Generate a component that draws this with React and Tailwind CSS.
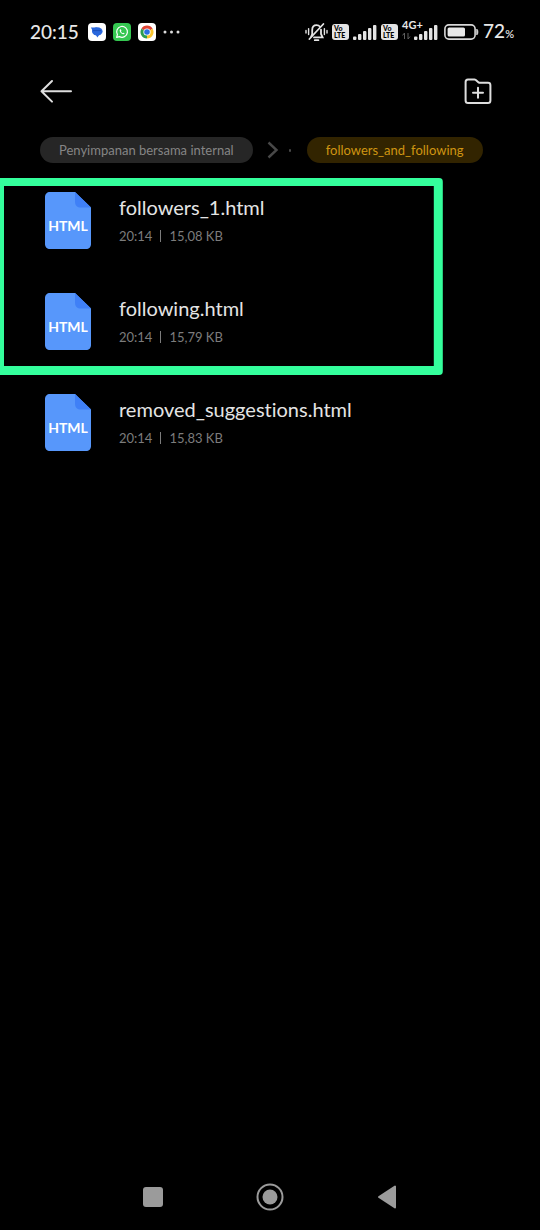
import React from "react";

const files = [
  { name: "followers_1.html", time: "20:14", size: "15,08 KB" },
  { name: "following.html", time: "20:14", size: "15,79 KB" },
  { name: "removed_suggestions.html", time: "20:14", size: "15,83 KB" },
];

function MessagesIcon() {
  return (
    <svg width="18" height="18" viewBox="0 0 18 18" aria-hidden="true">
      <rect width="18" height="18" rx="4" fill="#fff" />
      <ellipse cx="9.3" cy="8.4" rx="5.3" ry="4.2" fill="#2a67dc" />
      <path d="M2.8 4.4H9V8.4H4.2C4.2 6.8 3.8 5.6 2.8 4.4ZM7.6 11.6H11.4L9.4 14.4Z" fill="#2a67dc" />
      <path d="M5.4 7.6H12.6" stroke="#1a4fb8" strokeWidth="1" strokeLinecap="round" />
    </svg>
  );
}

function WhatsAppIcon() {
  return (
    <svg width="18" height="18" viewBox="0 0 18 18" aria-hidden="true">
      <rect width="18" height="18" rx="4" fill="#35c751" />
      <path d="M3.6 14.4L4.4 11.6A5.4 5.4 0 1 1 6.5 13.6Z" fill="none" stroke="#fff" strokeWidth="1.2" strokeLinejoin="round" />
      <path d="M7.3 6.2C6.2 6.8 6.6 8.6 7.9 10C9.3 11.4 11.1 11.8 11.7 10.6L10.4 9.7L9.6 10.2C8.9 9.9 8.3 9.2 8 8.6L8.4 7.8L7.9 6.3Z" fill="#fff" />
    </svg>
  );
}

function ChromeIcon() {
  return (
    <svg width="18" height="18" viewBox="0 0 18 18" aria-hidden="true">
      <rect width="18" height="18" rx="4" fill="#fff" />
      <path d="M9 9L3.37 5.75A6.5 6.5 0 0 1 14.63 5.75Z" fill="#df4334" />
      <path d="M9 9L14.63 5.75A6.5 6.5 0 0 1 9 15.5Z" fill="#f8c42c" />
      <path d="M9 9L9 15.5A6.5 6.5 0 0 1 3.37 5.75Z" fill="#2c9b4e" />
      <circle cx="9" cy="9" r="3.6" fill="#fff" />
      <circle cx="9" cy="9" r="2.8" fill="#2b6fe0" />
    </svg>
  );
}

function MutedBellIcon() {
  return (
    <svg width="23" height="20" viewBox="0 0 23 20" fill="none" stroke="#e4e4e4" strokeWidth="1.8" strokeLinecap="round" aria-hidden="true">
      <path d="M6.2 14.6L7.2 12V8.2C7.2 5.2 9 3.2 11.6 3.2C13 3.2 14.2 3.8 15 4.8M16 7.6V12L17.6 15.4H9M9.8 18.2H13.4" />
      <path d="M4.4 17L18.4 2" />
      <path d="M3.6 6.6V12.6M1 8.4V11M19.4 6.6V12.6M22 8.4V11" strokeWidth="1.4" />
    </svg>
  );
}

function VolteBadge() {
  return (
    <span className="flex h-4 w-[17px] flex-col justify-center rounded-[3px] bg-[#e4e4e4] pl-[2px] text-[7px] leading-[7px] font-black text-black">
      <span>Vo</span>
      <span>LTE</span>
    </span>
  );
}

function SignalIcon() {
  return (
    <svg width="24" height="16" viewBox="0 0 24 16" fill="#e4e4e4" aria-hidden="true">
      <rect x="0" y="12.6" width="3.4" height="3.4" rx="1" />
      <rect x="5" y="10" width="3.4" height="6" rx="1" />
      <rect x="10" y="7" width="3.4" height="9" rx="1" />
      <rect x="15" y="4" width="3.4" height="12" rx="1" />
      <rect x="20" y="1" width="3.4" height="15" rx="1" />
    </svg>
  );
}

function BatteryIcon() {
  return (
    <svg width="35" height="16" viewBox="0 0 35 16" aria-hidden="true">
      <rect x="0.9" y="0.9" width="30.2" height="14.2" rx="4" fill="none" stroke="#d8d8d8" strokeWidth="1.6" />
      <rect x="3.6" y="3.4" width="17.4" height="9.2" rx="1.6" fill="#e8e8e8" />
      <path d="M32.8 5.2C34.2 5.8 34.2 10.2 32.8 10.8Z" fill="#d8d8d8" stroke="#d8d8d8" />
    </svg>
  );
}

function StatusBar() {
  return (
    <div className="flex h-16 items-center justify-between pr-[26px] pl-[30px] text-[#e8e8e8]">
      <div className="flex items-center gap-[7px]">
        <span className="mr-[2px] text-[19px] leading-6 font-medium">20:15</span>
        <MessagesIcon />
        <WhatsAppIcon />
        <ChromeIcon />
        <svg width="17" height="4" viewBox="0 0 17 4" fill="#dcdcdc" aria-hidden="true">
          <circle cx="2" cy="2" r="1.5" />
          <circle cx="8.5" cy="2" r="1.5" />
          <circle cx="15" cy="2" r="1.5" />
        </svg>
      </div>
      <div className="flex items-center gap-1">
        <MutedBellIcon />
        <VolteBadge />
        <SignalIcon />
        <VolteBadge />
        <div className="relative mr-[2px] flex w-[36px] justify-end">
          <SignalIcon />
          <span className="absolute -top-[5px] left-0 text-[11px] leading-[11px] font-bold">4G+</span>
          <svg className="absolute top-[8px] left-0" width="9" height="8" viewBox="0 0 9 8" fill="none" stroke="#606060" aria-hidden="true">
            <path d="M2.5 7V1L0.5 3.4M6 1V7L8 4.6" />
          </svg>
        </div>
        <BatteryIcon />
        <span className="text-[19px] leading-6 font-medium">
          72<span className="text-[11px]">%</span>
        </span>
      </div>
    </div>
  );
}

function Toolbar() {
  return (
    <header className="flex h-[54px] items-center justify-between pr-[47px] pl-[38px]">
      <button type="button" aria-label="Kembali" className="flex">
        <svg width="36" height="26" viewBox="0 0 36 26" fill="none" stroke="#dedede" strokeWidth="2" strokeLinecap="round" strokeLinejoin="round">
          <path d="M14 3L3.5 13.3L14 23.6M3.5 13.3H33" />
        </svg>
      </button>
      <button type="button" aria-label="Folder baru" className="flex">
        <svg width="30" height="28" viewBox="0 0 30 28" fill="none" stroke="#dedede" strokeWidth="2" strokeLinecap="round" strokeLinejoin="round">
          <path d="M5 2.5H11.4C12 2.5 12.4 2.7 12.8 3L15.6 5.4C16 5.7 16.4 5.8 17 5.8H25C26.5 5.8 27.4 6.6 27.4 8.2V23.4C27.4 25 26.5 25.9 25 25.9H5C3.4 25.9 2.6 25 2.6 23.4V5C2.6 3.4 3.4 2.5 5 2.5Z" />
          <path d="M15 10.8V20.8M10 15.8H20" />
        </svg>
      </button>
    </header>
  );
}

function Breadcrumb() {
  return (
    <nav aria-label="Lokasi" className="flex h-[52px] items-center pt-3 pl-10 text-[13px] leading-4">
      <a href="#internal" className="flex h-[26px] items-center rounded-full bg-[#262626] px-[19px] text-[#858585]">
        Penyimpanan bersama internal
      </a>
      <svg className="ml-[14px]" width="12" height="18" viewBox="0 0 12 18" fill="none" stroke="#484848" strokeWidth="2.4" aria-hidden="true">
        <path d="M1.5 1.5L9.5 9L1.5 16.5" />
      </svg>
      <span className="mr-4 ml-[10px] h-[3px] w-[2px] rounded-full bg-[#484848]" />
      <a href="#followers" aria-current="page" className="flex h-[26px] items-center rounded-full bg-[#322400] px-[19px] text-[#cf9512]">
        followers_and_following
      </a>
    </nav>
  );
}

function HtmlFileIcon() {
  return (
    <span className="relative flex h-[57px] w-[46px] items-center justify-center">
      <svg className="absolute inset-0" width="46" height="57" viewBox="0 0 46 57" aria-hidden="true">
        <path d="M5 0H30L46 15.4V52C46 55 44 57 41 57H5C2 57 0 55 0 52V5C0 2 2 0 5 0Z" fill="#5797fb" />
        <path d="M30 0L46 15.4H36C32 15.4 30 13.4 30 9.4Z" fill="#3f80f7" />
      </svg>
      <span className="relative pt-[10px] text-[14px] leading-4 font-bold text-white">HTML</span>
    </span>
  );
}

function FileRow({ file }) {
  return (
    <li>
      <a href={"#" + file.name} className="flex h-[101px] items-center gap-7 pl-[45px]">
        <HtmlFileIcon />
        <span className="flex flex-col gap-[5px] pb-[2px]">
          <span className="text-[20px] leading-7 text-[#e4e4e4] [font-variant-ligatures:none]">{file.name}</span>
          <span className="flex items-center text-[13px] leading-5 text-[#7c7c7c]">
            {file.time}
            <span className="mx-2 h-3 w-px bg-[#7c7c7c]" />
            {file.size}
          </span>
        </span>
      </a>
    </li>
  );
}

function NavigationBar() {
  return (
    <nav aria-label="Navigasi sistem" className="flex h-[66px] items-center justify-center">
      <button type="button" aria-label="Terbaru" className="flex w-[117px] justify-center">
        <span className="h-5 w-5 rounded-[3px] bg-[#9b9b9b]" />
      </button>
      <button type="button" aria-label="Beranda" className="flex w-[117px] justify-center">
        <svg width="28" height="28" viewBox="0 0 28 28">
          <circle cx="14" cy="14" r="12.5" fill="none" stroke="#9b9b9b" strokeWidth="2" />
          <circle cx="14" cy="14" r="7.5" fill="#9b9b9b" />
        </svg>
      </button>
      <button type="button" aria-label="Kembali" className="flex w-[117px] justify-center">
        <svg width="20" height="24" viewBox="0 0 20 24" fill="#9b9b9b" stroke="#9b9b9b" strokeWidth="2" strokeLinejoin="round">
          <path d="M18 1.6V22.4L2 12Z" />
        </svg>
      </button>
    </nav>
  );
}

export default function App() {
  return (
    <div className="flex min-h-screen flex-col bg-black font-['Lato',sans-serif]">
      <StatusBar />
      <Toolbar />
      <Breadcrumb />
      <main className="flex-1">
        <div className="relative">
          <ul>
            {files.map((file) => (
              <FileRow key={file.name} file={file} />
            ))}
          </ul>
          <div className="pointer-events-none absolute top-2 left-0 h-[197px] w-[82%] rounded-r-[4px] bg-[#34ff9c] [clip-path:polygon(evenodd,0_0,100%_0,100%_100%,0_100%,0_0,4px_8px,calc(100%-9px)_8px,calc(100%-9px)_calc(100%-9px),4px_calc(100%-9px),4px_8px)]" />
        </div>
      </main>
      <NavigationBar />
    </div>
  );
}
